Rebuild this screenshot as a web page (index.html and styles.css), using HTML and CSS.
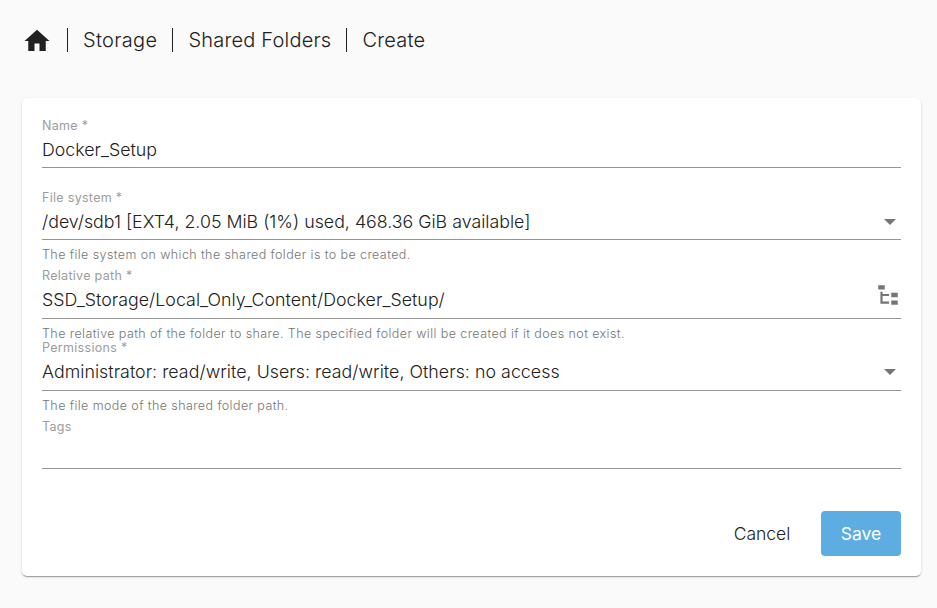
FILE: index.html
```html
<!DOCTYPE html>
<html lang="en">
<head>
<meta charset="utf-8">
<title>Create shared folder</title>
<link rel="stylesheet" href="styles.css">
</head>
<body>
<nav class="crumbs">
  <svg class="home" viewBox="0 0 24 24"><path d="M10 20v-6h4v6h5v-8h3L12 3 2 12h3v8z"/></svg>
  <span class="crumb storage">Storage</span>
  <span class="crumb folders">Shared Folders</span>
  <span class="crumb create">Create</span>
</nav>
<main class="card">
  <div class="field name">
    <label>Name *</label>
    <div class="value"><span>Docker_Setup</span></div>
  </div>
  <div class="field filesystem">
    <label>File system *</label>
    <div class="value"><span>/dev/sdb1 [EXT4, 2.05 MiB (1%) used, 468.36 GiB available]</span><i class="arrow"></i></div>
    <p class="hint">The file system on which the shared folder is to be created.</p>
  </div>
  <div class="field path">
    <label>Relative path *</label>
    <div class="value"><span>SSD_Storage/Local_Only_Content/Docker_Setup/</span><svg class="tree" viewBox="0 0 24 24"><path d="M3 3h6v4H3V3m12 7h6v4h-6v-4m0 7h6v4h-6v-4m-2-4H7v5h6v2H5V9h2v2h6v2z"/></svg></div>
    <p class="hint">The relative path of the folder to share. The specified folder will be created if it does not exist.</p>
  </div>
  <div class="field permissions">
    <label>Permissions *</label>
    <div class="value"><span>Administrator: read/write, Users: read/write, Others: no access</span><i class="arrow"></i></div>
    <p class="hint">The file mode of the shared folder path.</p>
  </div>
  <div class="field tags">
    <label>Tags</label>
    <div class="value"></div>
  </div>
  <div class="actions">
    <button class="cancel">Cancel</button>
    <button class="save">Save</button>
  </div>
</main>
</body>
</html>
```
FILE: styles.css
```css
* { box-sizing: border-box; }
body { margin: 0; height: 608px; background: #fafafa; color: #212121; font-family: Inter, sans-serif; font-weight: 300; overflow: hidden; }
.crumbs { display: flex; align-items: center; height: 80px; padding-left: 22px; font-size: 20px; }
.home { width: 30px; height: 30px; margin: 2px 15px 0 0; fill: #212121; }
.crumb { border-left: 1px solid #212121; height: 24px; line-height: 24px; padding-left: 15px; margin-right: 15px; white-space: nowrap; letter-spacing: .2px; }
.storage { letter-spacing: .33px; }
.card { width: 899px; height: 478px; margin: 18px 0 0 22px; padding: 19px 20px 0; background: #fff; border-radius: 5px; box-shadow: 0 2px 1px -1px #0003, 0 1px 1px #0002, 0 1px 3px #0002; display: flex; flex-direction: column; }
.field { height: 72px; flex: none; }
.filesystem { height: 78px; }
.path { height: 72px; }
.permissions { height: 79px; }
label { display: block; padding-top: 1px; font-size: 12.5px; font-weight: 400; line-height: 16px; color: #9c9c9c; letter-spacing: .3px; }
.value { height: 34px; border-bottom: 1px solid #949494; display: flex; justify-content: space-between; font-size: 17.8px; line-height: 32px; white-space: nowrap; }
.path .value, .permissions .value { height: 35px; letter-spacing: .04px; }
.arrow { width: 0; height: 0; margin: 13px 5px 0; border: 6px solid transparent; border-top-color: #757575; border-bottom: 0; }
.tree { width: 26px; height: 26px; margin-top: -2px; fill: #757575; }
.hint { margin: 7px 0 0; font-size: 12.5px; line-height: 16px; color: #757575; letter-spacing: .41px; white-space: nowrap; }
.actions { display: flex; justify-content: flex-end; margin-top: 21px; }
button { height: 45px; border: 0; border-radius: 4px; background: none; font: 300 17.5px Inter, sans-serif; color: #212121; padding: 0; }
.cancel { width: 78px; margin-right: 20px; }
.save { width: 80px; background: #5dade2; color: #fff; font-weight: 400; }
```
